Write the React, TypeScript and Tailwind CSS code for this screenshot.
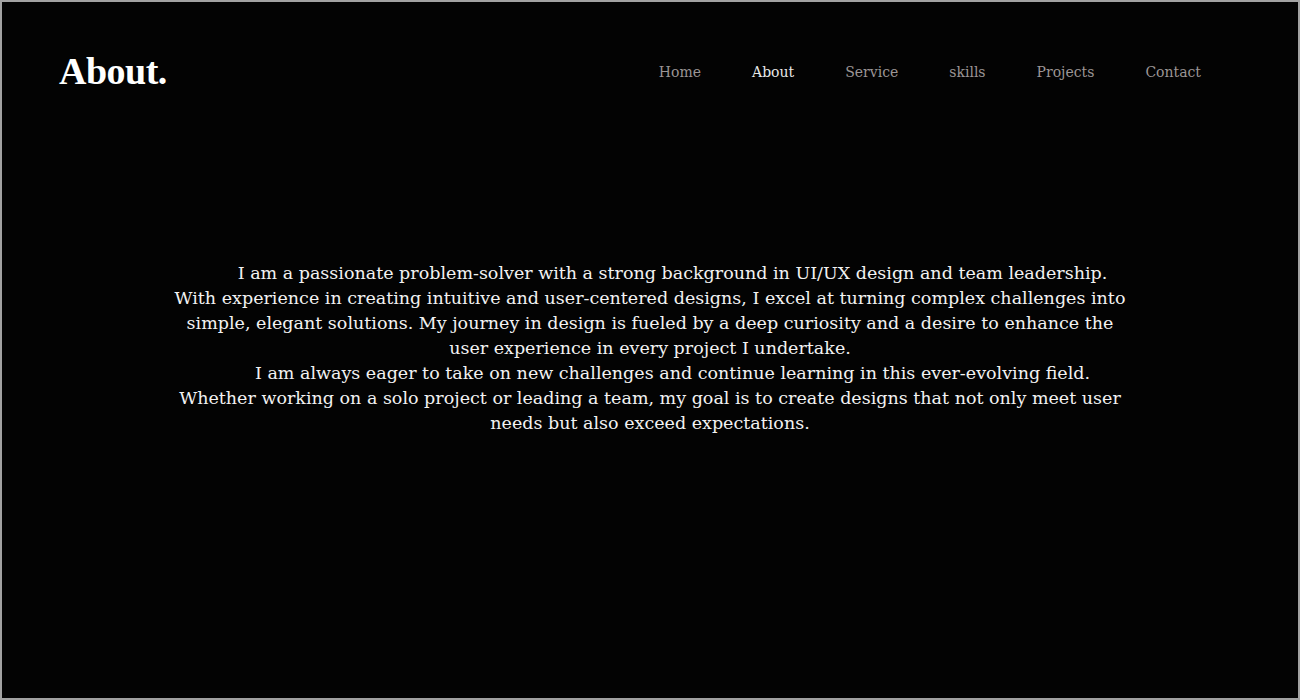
import React from 'react';

const navItems = ['Home', 'About', 'Service', 'skills', 'Projects', 'Contact'];

const App: React.FC = () => {
    return (
        <div className="h-[700px] w-full border-2 border-[#a2a2a2] bg-[#030303] text-[#f2f2f2] overflow-hidden">
            <header className="flex items-center justify-between pl-[57px] pr-[97px] pt-[44px]">
                <h1 className="font-['Liberation_Serif',serif] text-[38px] font-bold leading-[50px] tracking-[-0.5px] text-white">About.</h1>
                <nav className="flex items-center gap-[51px] pt-[3px] font-['DejaVu_Serif',serif] text-[14px]">
                    {navItems.map((item) => (
                        <a
                            key={item}
                            href="#"
                            className={item === 'About' ? 'text-[#e8e8e8]' : 'text-[#9b9595]'}
                        >
                            {item}
                        </a>
                    ))}
                </nav>
            </header>

            {/* lines broken by hand so they wrap as in the design */}
            <section className="mx-auto mt-[165px] w-[1000px] text-center font-['DejaVu_Serif',serif] text-[17.5px] leading-[25px]">
                <p className="indent-[45px]">
                    I am a passionate problem-solver with a strong background in UI/UX design and team leadership.<br />
                    With experience in creating intuitive and user-centered designs, I excel at turning complex challenges into<br />
                    simple, elegant solutions. My journey in design is fueled by a deep curiosity and a desire to enhance the<br />
                    user experience in every project I undertake.
                </p>
                <p className="indent-[45px]">
                    I am always eager to take on new challenges and continue learning in this ever-evolving field.<br />
                    Whether working on a solo project or leading a team, my goal is to create designs that not only meet user<br />
                    needs but also exceed expectations.
                </p>
            </section>
        </div>
    );
};

export default App;
